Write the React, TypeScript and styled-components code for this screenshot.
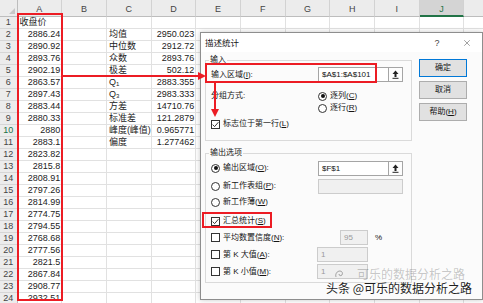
import React from 'react';
import styled, { createGlobalStyle } from 'styled-components';
import { X } from 'lucide-react';

const GlobalStyle = createGlobalStyle`
  *, *::before, *::after { box-sizing: border-box; }
  html, body { margin: 0; padding: 0; background: #fff; }
  body { width: 483px; height: 303px; overflow: hidden; font-family: "Liberation Sans", "Noto Sans CJK SC", sans-serif; }
`;

const Screen = styled.div`
  position: relative;
  width: 483px;
  height: 303px;
  overflow: hidden;
  background: #fff;
`;

/* ---------------- Spreadsheet ---------------- */
const Sheet = styled.div`
  display: grid;
  grid-template-columns: 17.5px repeat(11, 44.7px);
  grid-template-rows: 17px repeat(24, 12px);
  font-family: "Liberation Sans", "Noto Sans CJK SC", sans-serif;
  font-size: 9px;
`;

const Corner = styled.div`
  position: relative;
  background: #ececec;
  border-right: 1px solid #bdbdbd;
  border-bottom: 1px solid #bdbdbd;
  &::after {
    content: '';
    position: absolute;
    right: 2px;
    bottom: 2px;
    border-left: 6px solid transparent;
    border-bottom: 6px solid #c8c8c8;
  }
`;

const ColHead = styled.div<{ $active?: boolean }>`
  background: ${p => (p.$active ? '#d4d4d4' : '#ececec')};
  border-right: 1px solid #d2d2d2;
  border-bottom: ${p => (p.$active ? '2px solid #217346' : '1px solid #bdbdbd')};
  color: ${p => (p.$active ? '#217346' : '#444')};
  display: flex;
  align-items: flex-end;
  justify-content: center;
  padding-bottom: ${p => (p.$active ? '1px' : '2px')};
  line-height: 10px;
`;

const RowHead = styled.div<{ $active?: boolean }>`
  background: #ececec;
  border-right: 1px solid #bdbdbd;
  border-bottom: 1px solid #d6d6d6;
  color: ${p => (p.$active ? '#217346' : '#444')};
  line-height: 11px;
  text-align: center;
`;

const Cell = styled.div<{ $align?: 'left' | 'right' }>`
  border-right: 1px solid #e1e1e1;
  border-bottom: 1px solid #e1e1e1;
  line-height: 11px;
  padding: 0 1px 0 2px;
  text-align: ${p => p.$align ?? 'left'};
  white-space: nowrap;
  color: #1c1c1c;
`;

const Sub = styled.span`
  font-size: 6px;
  vertical-align: -1px;
`;

const COLS = ['A', 'B', 'C', 'D', 'E', 'F', 'G', 'H', 'I', 'J', 'K'];

const prices = [
  '2886.24', '2890.92', '2893.76', '2902.19', '2863.57', '2897.43', '2883.44', '2880.33',
  '2880', '2883.1', '2823.82', '2815.8', '2808.91', '2797.26', '2814.99', '2774.75',
  '2794.55', '2768.68', '2777.56', '2821.5', '2867.84', '2908.77', '2932.51',
];

const stats: [React.ReactNode, string][] = [
  ['均值', '2950.023'],
  ['中位数', '2912.72'],
  ['众数', '2893.76'],
  ['极差', '502.12'],
  [<>Q<Sub>1</Sub></>, '2883.355'],
  [<>Q<Sub>3</Sub></>, '2983.333'],
  ['方差', '14710.76'],
  ['标准差', '121.2879'],
  ['峰度(峰值)', '0.965771'],
  ['偏度', '1.277462'],
];

function cellContent(row: number, col: string): { text: React.ReactNode; align: 'left' | 'right' } {
  if (col === 'A') {
    if (row === 1) return { text: '收盘价', align: 'left' };
    return { text: prices[row - 2] ?? '', align: 'right' };
  }
  const s = stats[row - 2];
  if (s && col === 'C') return { text: s[0], align: 'left' };
  if (s && col === 'D') return { text: s[1], align: 'right' };
  return { text: '', align: 'left' };
}

const Spreadsheet = () => {
  const rows = Array.from({ length: 24 }, (_, i) => i + 1);
  return (
    <Sheet>
      <Corner />
      {COLS.map(c => (
        <ColHead key={c} $active={c === 'J'}>{c === 'K' ? '' : c}</ColHead>
      ))}
      {rows.map(r => (
        <React.Fragment key={r}>
          <RowHead $active={r === 10}>{r}</RowHead>
          {COLS.map(c => {
            const { text, align } = cellContent(r, c);
            return <Cell key={c} $align={align}>{text}</Cell>;
          })}
        </React.Fragment>
      ))}
    </Sheet>
  );
};

/* ---------------- Dialog ---------------- */
const Dialog = styled.div`
  position: absolute;
  left: 200px;
  top: 32px;
  width: 283px;
  height: 268px;
  background: #fbfbfb;
  border: 1px solid #8e8e8e;
  box-shadow: 0 0 5px rgba(0, 0, 0, 0.22);
  display: flex;
  flex-direction: column;
  font-family: "Liberation Sans", "Noto Sans CJK SC", sans-serif;
  font-size: 8px;
  color: #151515;
`;

const TitleBar = styled.div`
  height: 19px;
  flex: none;
  display: flex;
  align-items: center;
  padding-left: 4px;
  background: #fff;
`;

const Title = styled.div`
  flex: 1;
  font-size: 8.5px;
  line-height: 12px;
`;

const TitleBtn = styled.div<{ $mr: number }>`
  width: 20px;
  height: 19px;
  margin-right: ${p => p.$mr}px;
  display: flex;
  align-items: center;
  justify-content: center;
  color: #444;
  font-size: 9px;
`;

const Body = styled.div`
  flex: 1;
  display: flex;
  gap: 7px;
  padding: 3px 0 0 4px;
`;

const Groups = styled.div`
  width: 207px;
  display: flex;
  flex-direction: column;
`;

const Group = styled.fieldset<{ $mt?: number }>`
  margin: ${p => p.$mt ?? 0}px 0 0 0;
  padding: 0 4px ${p => (p.$mt ? 3 : 10)}px 5px;
  border: 1px solid #dadada;
  min-width: 0;
  display: flex;
  flex-direction: column;
`;

const Legend = styled.legend`
  padding: 0 1px;
  margin-left: -2px;
  font-size: 8px;
  line-height: 10px;
`;

const FormRow = styled.div<{ $h: number; $mt: number; $top?: boolean }>`
  display: flex;
  align-items: ${p => (p.$top ? 'flex-start' : 'center')};
  height: ${p => p.$h}px;
  margin-top: ${p => p.$mt}px;
`;

const FieldLabel = styled.div<{ $w: number }>`
  width: ${p => p.$w}px;
  flex: none;
  line-height: 12px;
  white-space: nowrap;
`;

const U = styled.span`
  text-decoration: underline;
  text-underline-offset: 1px;
`;

const Choice = styled.div`
  display: flex;
  align-items: center;
  gap: 3px;
  height: 12px;
  line-height: 12px;
  white-space: nowrap;
`;

const ChoiceStack = styled.div`
  display: flex;
  flex-direction: column;
`;

const RadioDot = styled.span<{ $on?: boolean }>`
  width: 9px;
  height: 9px;
  border-radius: 50%;
  border: 1px solid #333;
  background: #fff;
  flex: none;
  display: flex;
  align-items: center;
  justify-content: center;
  &::after {
    content: '';
    width: 4px;
    height: 4px;
    border-radius: 50%;
    background: ${p => (p.$on ? '#111' : 'transparent')};
  }
`;

const CheckBox = styled.span`
  width: 9px;
  height: 9px;
  border: 1px solid #333;
  background: #fff;
  flex: none;
  display: flex;
  align-items: center;
  justify-content: center;
`;

const TextField = styled.div<{ $w: number; $disabled?: boolean }>`
  width: ${p => p.$w}px;
  height: 15px;
  flex: none;
  border: 1px solid ${p => (p.$disabled ? '#cccccc' : '#a5a5a5')};
  background: ${p => (p.$disabled ? '#f0f0f0' : '#fff')};
  color: ${p => (p.$disabled ? '#9a9a9a' : '#111')};
  font-size: 8px;
  line-height: 13px;
  padding-left: 3px;
  white-space: nowrap;
`;

const RefButton = styled.div`
  width: 14px;
  height: 15px;
  flex: none;
  border: 1px solid #a5a5a5;
  border-left: none;
  background: #fdfdfd;
  display: flex;
  align-items: center;
  justify-content: center;
`;

const Percent = styled.span`
  margin-left: 7px;
`;

const ButtonCol = styled.div`
  display: flex;
  flex-direction: column;
  gap: 4px;
  padding-top: 4px;
`;

const PushButton = styled.div<{ $primary?: boolean }>`
  width: 48px;
  height: 18px;
  border: 1px solid ${p => (p.$primary ? '#0078d7' : '#adadad')};
  background: #e1e1e1;
  display: flex;
  align-items: center;
  justify-content: center;
  font-size: 8px;
  line-height: 10px;
`;

const CheckMark = () => (
  <svg width="7" height="7" viewBox="0 0 7 7">
    <path d="M0.6 3.6 L2.6 5.6 L6.4 1.2" fill="none" stroke="#222" strokeWidth="0.9" />
  </svg>
);

const CollapseIcon = () => (
  <svg width="7" height="9" viewBox="0 0 7 9">
    <path d="M3.5 0.5 L6.5 4 L4.5 4 L4.5 7 L2.5 7 L2.5 4 L0.5 4 Z" fill="#222" />
    <rect x="0.5" y="7.8" width="6" height="1" fill="#222" />
  </svg>
);

const Radio = ({ on, children }: { on?: boolean; children: React.ReactNode }) => (
  <Choice><RadioDot $on={on} /><span>{children}</span></Choice>
);

const Check = ({ on, children }: { on?: boolean; children: React.ReactNode }) => (
  <Choice><CheckBox>{on && <CheckMark />}</CheckBox><span>{children}</span></Choice>
);

const DescriptiveDialog = () => (
  <Dialog>
    <TitleBar>
      <Title>描述统计</Title>
      <TitleBtn $mr={10}>?</TitleBtn>
      <TitleBtn $mr={5}><X size={10} strokeWidth={1.2} /></TitleBtn>
    </TitleBar>
    <Body>
      <Groups>
        <Group>
          <Legend>输入</Legend>
          <FormRow $h={17} $mt={1}>
            <FieldLabel $w={107}>输入区域(<U>I</U>):</FieldLabel>
            <TextField $w={71}>$A$1:$A$101</TextField>
            <RefButton><CollapseIcon /></RefButton>
          </FormRow>
          <FormRow $h={24} $mt={7} $top>
            <FieldLabel $w={107}>分组方式:</FieldLabel>
            <ChoiceStack>
              <Radio on>逐列(<U>C</U>)</Radio>
              <Radio>逐行(<U>R</U>)</Radio>
            </ChoiceStack>
          </FormRow>
          <FormRow $h={12} $mt={4}>
            <Check on>标志位于第一行(<U>L</U>)</Check>
          </FormRow>
        </Group>
        <Group $mt={7}>
          <Legend>输出选项</Legend>
          <FormRow $h={16} $mt={2}>
            <FieldLabel $w={107}><Radio on>输出区域(<U>O</U>):</Radio></FieldLabel>
            <TextField $w={71}>$F$1</TextField>
            <RefButton><CollapseIcon /></RefButton>
          </FormRow>
          <FormRow $h={16} $mt={2}>
            <FieldLabel $w={107}><Radio>新工作表组(<U>P</U>):</Radio></FieldLabel>
            <TextField $w={85} $disabled />
          </FormRow>
          <FormRow $h={12} $mt={2}>
            <Radio>新工作薄(<U>W</U>)</Radio>
          </FormRow>
          <FormRow $h={12} $mt={7}>
            <Check on>汇总统计(<U>S</U>)</Check>
          </FormRow>
          <FormRow $h={15} $mt={3}>
            <FieldLabel $w={129}><Check>平均数置信度(<U>N</U>):</Check></FieldLabel>
            <TextField $w={28} $disabled>95</TextField>
            <Percent>%</Percent>
          </FormRow>
          <FormRow $h={15} $mt={2}>
            <FieldLabel $w={106}><Check>第 K 大值(<U>A</U>):</Check></FieldLabel>
            <TextField $w={51} $disabled>1</TextField>
          </FormRow>
          <FormRow $h={15} $mt={2}>
            <FieldLabel $w={106}><Check>第 K 小值(<U>M</U>):</Check></FieldLabel>
            <TextField $w={51} $disabled>1</TextField>
          </FormRow>
        </Group>
      </Groups>
      <ButtonCol>
        <PushButton $primary>确定</PushButton>
        <PushButton>取消</PushButton>
        <PushButton>帮助(<U>H</U>)</PushButton>
      </ButtonCol>
    </Body>
  </Dialog>
);

/* ---------------- Annotations ---------------- */
const RedFrame = styled.div<{ $x: number; $y: number; $w: number; $h: number }>`
  position: absolute;
  left: ${p => p.$x}px;
  top: ${p => p.$y}px;
  width: ${p => p.$w}px;
  height: ${p => p.$h}px;
  border: 2px solid #ec1c24;
  pointer-events: none;
`;

const ArrowLayer = styled.svg`
  position: absolute;
  left: 0;
  top: 0;
  pointer-events: none;
`;

const Watermark = styled.div`
  position: absolute;
  left: 326px;
  top: 280px;
  font-family: "Noto Sans CJK SC", sans-serif;
  font-size: 12px;
  line-height: 16px;
  color: #1e1e1e;
  white-space: nowrap;
  text-shadow: 0 0 2px #fff, 0 0 2px #fff, 0 0 3px #fff;
`;

const Ghost = styled.div`
  position: absolute;
  left: 334px;
  top: 268px;
  display: flex;
  align-items: center;
  gap: 12px;
  font-family: "Noto Sans CJK SC", sans-serif;
  font-size: 12px;
  line-height: 12px;
  color: rgba(70, 70, 70, 0.3);
  white-space: nowrap;
`;

const Annotations = () => (
  <>
    <RedFrame $x={17} $y={13} $w={46} $h={288} />
    <RedFrame $x={205} $y={63} $w={172} $h={20} />
    <RedFrame $x={202} $y={212} $w={70} $h={16} />
    <ArrowLayer width="483" height="303" viewBox="0 0 483 303">
      <line x1="63" y1="76" x2="199" y2="76" stroke="#ec1c24" strokeWidth="2" />
      <polygon points="198,72 206,76 198,80" fill="#ec1c24" />
      <line x1="215" y1="83" x2="215" y2="110" stroke="#ec1c24" strokeWidth="2" />
      <polygon points="211,109 219,109 215,117" fill="#ec1c24" />
    </ArrowLayer>
    <Ghost>
      <svg width="11" height="11" viewBox="0 0 11 11">
        <path d="M2 8 C1 5 3 2 6 2 C8 2 9 4 8 6 C7 7 5 7 5 5" fill="none" stroke="rgba(70,70,70,0.45)" strokeWidth="1" />
      </svg>
      <span>可乐的数据分析之路</span>
    </Ghost>
    <Watermark>头条 @可乐的数据分析之路</Watermark>
  </>
);

export default function App() {
  return (
    <Screen>
      <GlobalStyle />
      <Spreadsheet />
      <DescriptiveDialog />
      <Annotations />
    </Screen>
  );
}
